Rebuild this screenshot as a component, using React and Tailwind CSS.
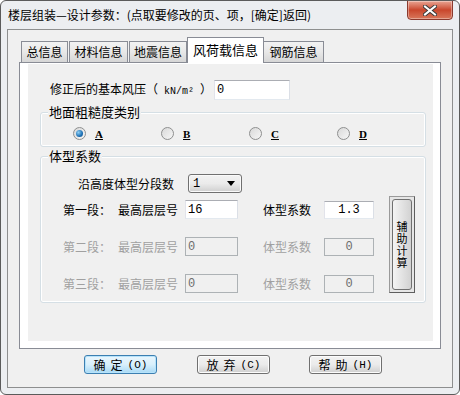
import React from "react";

const cjk = "font-['Noto_Sans_CJK_SC','Noto_Sans_CJK_JP',sans-serif]";
const mono = "font-['Liberation_Mono','DejaVu_Sans_Mono',monospace]";

const Tab = ({ label, w, active, ml }) => {
  if (active) {
    return (
      <div
        className={`relative z-10 -mb-px flex h-[26px] items-start justify-center border border-b-0 border-[#898c95] bg-white pt-[4px] text-[13px] leading-[16px] text-black ${w} ${ml}`}
      >
        {label}
      </div>
    );
  }
  return (
    <div
      className={`flex h-[21px] items-center justify-center border border-b-0 border-[#898c95] bg-gradient-to-b from-[#f2f2f2] via-[#e8e8e8] to-[#d6d6d6] text-[12px] leading-[14px] text-black ${w} ${ml}`}
    >
      {label}
    </div>
  );
};

const Radio = ({ checked, letter }) => (
  <div className="flex w-[89px] items-center">
    <div className="flex h-[13px] w-[13px] items-center justify-center rounded-full border border-[#8e8f8f] bg-gradient-to-br from-[#d9d9d9] to-[#f6f6f6]">
      {checked && (
        <div className="h-[7px] w-[7px] rounded-full bg-[radial-gradient(circle_at_35%_35%,#8fd0f5,#1c6fb4_60%,#0d4a80)]" />
      )}
    </div>
    <span className="ml-[9px] text-[11px] font-bold leading-[12px] underline font-['Liberation_Serif',serif]">
      {letter}
    </span>
  </div>
);

const Field = ({ value, w, h, disabled, center }) => (
  <div
    className={`flex ${w} ${h} items-center border ${
      disabled
        ? "border-[#adb2b5] bg-[#f0f0f0] text-[#6d6d6d]"
        : "border-[#abadb3] border-b-[#e3e9ef] border-l-[#e2e3ea] border-r-[#dbdfe6] bg-white text-black"
    } ${center ? "justify-center" : "pl-[2px]"} ${mono} text-[12px] leading-[12px]`}
  >
    {value}
  </div>
);

const SegRow = ({ name, top, coef, disabled }) => (
  <div className={`flex h-[19px] items-center pl-[22px] ${disabled ? "text-[#a0a0a0]" : "text-black"}`}>
    <span className="w-[55px]">{name}</span>
    <span className="w-[67px]">最高层层号</span>
    <Field value={top} w="w-[53px]" h="h-[19px]" disabled={disabled} />
    <span className="ml-[25px] w-[61px]">体型系数</span>
    <Field value={coef} w="w-[50px]" h="h-[18px]" disabled={disabled} center />
  </div>
);

const DlgButton = ({ label, hot, focus, ml }) => (
  <div
    className={`flex h-[19px] w-[73px] items-center justify-center rounded-[3px] border ${
      focus
        ? "border-[#3c7fb1] bg-gradient-to-b from-[#eaf6fd] via-[#d9f0fc] to-[#a7d9f5] shadow-[inset_0_0_0_1px_#b6e3fb]"
        : "border-[#707070] bg-gradient-to-b from-[#f2f2f2] via-[#ebebeb] to-[#cfcfcf] shadow-[inset_0_0_0_1px_#fcfcfc]"
    } ${ml} text-[12px] leading-[12px] text-black`}
  >
    <span className="tracking-[5px]">{label}</span>
    <span className={`${mono} text-[11px]`}>({hot})</span>
  </div>
);

export default function App() {
  return (
    <div className={`${cjk} h-[395px] w-[460px] overflow-hidden rounded-[6px] border border-[#5b5b5b] bg-[#eceef1] text-[12px]`}>
      {/* title bar */}
      <div className="flex h-[28px] items-start">
        <div className="pl-[7px] pt-[6px] text-[12px] leading-[16px] text-black">
          楼层组装—设计参数：(点取要修改的页、项，[确定]返回)
        </div>
        <div className="ml-auto mr-[6px] -mt-px flex h-[20px] w-[46px] items-center justify-center rounded-b-[4px] border border-[#8a3a2e] bg-gradient-to-b from-[#e8a493] via-[#c9462c] to-[#d8765a] shadow-[inset_0_0_0_1px_rgba(255,255,255,0.35)]">
          <svg width="14" height="11" viewBox="0 0 14 11">
            <path d="M2 1.5 L12 9.5 M12 1.5 L2 9.5" stroke="#3b3b3b" strokeWidth="4" strokeLinecap="square" />
            <path d="M2 1.5 L12 9.5 M12 1.5 L2 9.5" stroke="#ffffff" strokeWidth="2" strokeLinecap="square" />
          </svg>
        </div>
      </div>

      {/* client area */}
      <div className="ml-[6px] h-[359px] w-[446px] border border-[#8e8f8f] bg-[#f0f0f0]">
        {/* tabs */}
        <div className="flex h-[32px] items-end pl-[11px]">
          <Tab label="总信息" w="w-[47px]" ml="ml-[2px]" />
          <Tab label="材料信息" w="w-[59px]" ml="ml-[1px]" />
          <Tab label="地震信息" w="w-[58px]" ml="ml-[1px]" />
          <Tab label="风荷载信息" w="w-[77px]" ml="ml-[0px]" active />
          <Tab label="钢筋信息" w="w-[61px]" ml="-ml-px" />
        </div>

        {/* tab page */}
        <div className="ml-[11px] h-[287px] w-[422px] border border-[#898c95] bg-white">
          <div className="ml-[8px] mt-[1px] h-[277px] w-[405px] bg-[#f0f0f0] text-[12px] leading-[14px] text-black">
            {/* wind pressure */}
            <div className="box-content flex h-[20px] items-center pt-[16px]">
              <span className="ml-[22px] w-[164px]">
                修正后的基本风压（<span className={`${mono} text-[10px]`}> kN/m² </span>）
              </span>
              <Field value="0" w="w-[76px]" h="h-[20px]" />
            </div>

            {/* roughness group */}
            <div className="relative ml-[12px] mt-[12px] h-[35px] w-[386px] rounded-[3px] border border-[#d5dfe5] shadow-[inset_0_0_0_1px_#ffffff]">
              <span className="absolute -top-[8px] left-[7px] bg-[#f0f0f0] px-px text-[13px] leading-[14px]">
                地面粗糙度类别
              </span>
              <div className="flex pl-[32px] pt-[14px]">
                <Radio letter="A" checked />
                <Radio letter="B" />
                <Radio letter="C" />
                <Radio letter="D" />
              </div>
            </div>

            {/* shape coefficient group */}
            <div className="relative ml-[12px] mt-[9px] h-[147px] w-[386px] rounded-[3px] border border-[#d5dfe5] shadow-[inset_0_0_0_1px_#ffffff]">
              <span className="absolute -top-[8px] left-[7px] bg-[#f0f0f0] px-px text-[13px] leading-[14px]">
                体型系数
              </span>
              <div className="flex pt-[17px]">
                <div className="flex w-[348px] flex-col">
                  <div className="flex h-[19px] items-center pl-[37px]">
                    <span className="w-[110px]">沿高度体型分段数</span>
                    <div className="flex h-[19px] w-[54px] items-center justify-between rounded-[3px] border border-[#707070] bg-gradient-to-b from-[#f2f2f2] via-[#ebebeb] to-[#cfcfcf] pl-[4px] pr-[6px] shadow-[inset_0_0_0_1px_#fafafa]">
                      <span className={`${mono} text-[12px]`}>1</span>
                      <svg width="8" height="5" viewBox="0 0 8 5">
                        <path d="M0 0 L8 0 L4 5 Z" fill="#000" />
                      </svg>
                    </div>
                  </div>
                  <div className="mt-[7px] flex flex-col gap-[18px]">
                    <SegRow name="第一段：" top="16" coef="1.3" />
                    <SegRow name="第二段：" top="0" coef="0" disabled />
                    <SegRow name="第三段：" top="0" coef="0" disabled />
                  </div>
                </div>
                <div className="mt-[22px] h-[97px] w-[26px] border border-[#5e5e5e] border-l-[#9a9a9a] border-t-[#9a9a9a] bg-[#e6e6e6] p-[2px]">
                  <div className="flex h-full w-full items-center justify-center rounded-[3px] border border-[#707070] bg-gradient-to-r from-[#f4f4f4] to-[#d2d2d2]">
                    <span className="text-[11px] leading-[16px] tracking-[1px] [writing-mode:vertical-rl]">
                      辅助计算
                    </span>
                  </div>
                </div>
              </div>
            </div>
          </div>
        </div>

        {/* buttons */}
        <div className="mt-[6px] flex pl-[76px]">
          <DlgButton label="确定" hot="O" focus ml="" />
          <DlgButton label="放弃" hot="C" ml="ml-[40px]" />
          <DlgButton label="帮助" hot="H" ml="ml-[39px]" />
        </div>
      </div>
    </div>
  );
}
